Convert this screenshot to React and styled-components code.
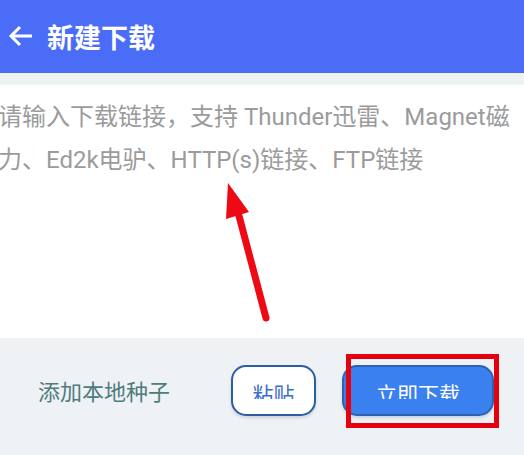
import React from 'react';
import styled, { createGlobalStyle } from 'styled-components';

const GlobalStyle = createGlobalStyle`
  html, body {
    margin: 0;
    padding: 0;
    background: #eef2f4;
  }
  body {
    font-family: Roboto, "Noto Sans CJK SC", sans-serif;
  }
`

function BackIcon() {
  return (
    <svg width="26" height="24" viewBox="0 0 26 24">
      <path d="M25 12H4M13 3L4 12L13 21" fill="none" stroke="#fff" strokeWidth="3" strokeLinejoin="miter" />
    </svg>
  );
}

function RedArrow() {
  // annotation arrow pointing at the input text
  return (
    <ArrowLayer width="70" height="160" viewBox="215 175 70 160">
      <line x1="238" y1="212" x2="266" y2="318" stroke="#ee0a14" strokeWidth="7" strokeLinecap="round" />
      <polygon points="228,183 249,212 226,219" fill="#ee0a14" />
    </ArrowLayer>
  );
}

export default function App() {
  return (
    <Page>
      <GlobalStyle />
      <Header>
        <BackIcon />
        <Title>新建下载</Title>
      </Header>
      <Divider />
      <InputArea>
        <Placeholder>
          请输入下载链接，支持 Thunder迅雷、Magnet磁力、Ed2k电驴、HTTP(s)链接、FTP链接
        </Placeholder>
        <RedArrow />
      </InputArea>
      <Footer>
        <LocalSeed>添加本地种子</LocalSeed>
        <Button $width={85}>
          <Label>粘贴</Label>
        </Button>
        <Button $primary $width={152}>
          <Label>立即下载</Label>
          <Highlight />
        </Button>
      </Footer>
    </Page>
  );
}

const Page = styled.div`
  min-height: 100vh;
  display: flex;
  flex-direction: column;
  overflow: hidden;
`
const Header = styled.div`
  height: 73px;
  background: #4a6cf7;
  border-bottom: 1px solid #5468dc;
  box-sizing: border-box;
  display: flex;
  align-items: center;
  gap: 14px;
  padding: 0 0 0 7px;
`
const Title = styled.div`
  color: #fff;
  font-size: 27px;
  font-weight: 700;
  font-family: "Noto Sans CJK SC", sans-serif;
  line-height: 1;
`
const Divider = styled.div`
  height: 12px;
  background: #eef2f3;
  border-top: 1px solid #e6f3e8;
  box-sizing: border-box;
`
const InputArea = styled.div`
  position: relative;
  height: 253px;
  background: #fff;
  padding-top: 11px;
  box-sizing: border-box;
`
const Placeholder = styled.div`
  margin-left: -2px;
  font-size: 24px;
  line-height: 43px;
  color: #9b9b9b;
`
const ArrowLayer = styled.svg`
  position: absolute;
  left: 215px;
  top: 90px;
  pointer-events: none;
`
const Footer = styled.div`
  flex: 1;
  display: flex;
  align-items: flex-start;
  padding: 27px 30px 0 38px;
  background: #eef2f4;
`
const LocalSeed = styled.div`
  flex: 1;
  margin-top: 11px;
  font-size: 22px;
  line-height: 28px;
  color: #4e7b7e;
  font-family: "Noto Sans CJK SC", sans-serif;
`
const Button = styled.div`
  position: relative;
  width: ${p => p.$width}px;
  height: 51px;
  box-sizing: border-box;
  margin-left: 26px;
  padding-top: 16px;
  display: flex;
  justify-content: center;
  align-items: flex-start;
  border-radius: 15px;
  border: 2px solid ${p => (p.$primary ? '#2d62b0' : '#2b5ea5')};
  background: ${p => (p.$primary ? '#3b80ef' : '#fff')};
  color: ${p => (p.$primary ? '#fff' : '#3a6dcf')};
  box-shadow: 0 2px 3px rgba(60, 90, 140, 0.2);
`
const Label = styled.span`
  display: block;
  height: 16px;
  overflow: hidden;
  font-size: 21px;
  line-height: 21px;
  font-family: "Noto Sans CJK SC", sans-serif;
`
const Highlight = styled.div`
  position: absolute;
  left: 2px;
  top: -13px;
  width: 153px;
  height: 74px;
  box-sizing: border-box;
  border: 5px solid #e6000e;
`
